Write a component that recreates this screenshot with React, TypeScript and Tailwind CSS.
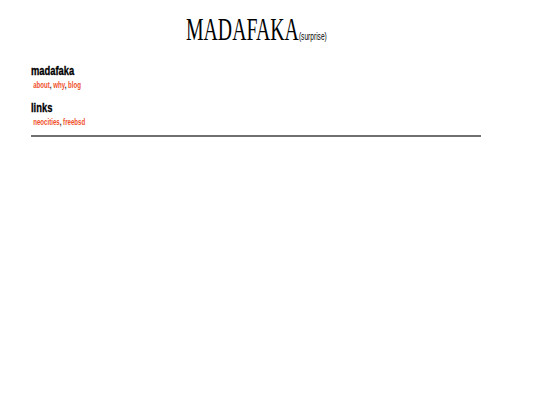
export default function App() {
  const sections = [
    { title: "madafaka", links: ["about", "why", "blog"] },
    { title: "links", links: ["neocities", "freebsd"] },
  ];

  return (
    <div className="min-h-screen bg-white pl-[31px] pt-[14px]">
      <div className="flex w-[450px] flex-col items-start leading-none">
        <div className="flex h-[31px] w-full justify-center">
          <span className="inline-block scale-x-[0.6] scale-y-[0.95] font-['Liberation_Serif',serif] text-[33px] leading-none text-black">
            MADAFAKA
            <span className="font-['Liberation_Sans',sans-serif] text-[11px]">(surprise)</span>
          </span>
        </div>

        {sections.map((s, i) => (
          <div key={s.title} className={`flex flex-col items-start ${i === 0 ? "mt-[20px]" : "mt-[12px]"}`}>
            <h2 className="h-[12px] origin-left scale-x-[0.75] font-['Liberation_Sans',sans-serif] text-[12.5px] font-bold leading-none text-black [-webkit-text-stroke:0.3px_black]">
              {s.title}
            </h2>
            <div className="mt-[4px] h-[9px] origin-left scale-x-[0.72] pl-[3px] font-['Liberation_Sans',sans-serif] text-[8.5px] font-bold leading-none">
              {s.links.map((l, j) => (
                <span key={l}>
                  <span className="text-[#f0502a]">{l}</span>
                  {j < s.links.length - 1 && <span className="text-black">, </span>}
                </span>
              ))}
            </div>
          </div>
        ))}

        <div className="mt-[8px] h-[2px] w-full bg-[#707070]" />
      </div>
    </div>
  );
}
